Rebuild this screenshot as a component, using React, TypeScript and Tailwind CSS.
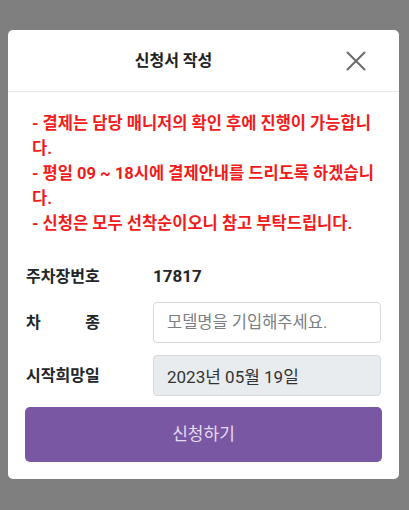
const font = { fontFamily: 'Roboto, "Noto Sans CJK KR", sans-serif' };

function CloseIcon() {
  return (
    <svg width="20" height="20" viewBox="0 0 20 20" fill="none" stroke="#6b6b6b" strokeWidth="2" strokeLinecap="round">
      <path d="M1.5 1.5 L18.5 18.5 M18.5 1.5 L1.5 18.5" />
    </svg>
  );
}

export default function App() {
  return (
    <div
      className="min-h-[510px] w-full bg-[#7f7f7f] pt-[30px] px-[8px] pb-[32px] text-[#212529]"
      style={font}
    >
      <div className="w-[391px] rounded-[5px] bg-white">
        <div className="flex h-[62px] items-center border-b border-[#e6e6e6]">
          <h2 className="w-[331px] text-center text-[16px] font-bold text-[#222]">신청서 작성</h2>
          <button className="ml-[7px] flex h-[20px] w-[20px] items-center justify-center">
            <CloseIcon />
          </button>
        </div>

        <div className="px-[17px] pt-[19px] pb-[17px]">
          <div className="w-[353px] pl-[7px] text-[16.5px] font-bold leading-[25px] text-[#f01b1b]">
            <p>- 결제는 담당 매니저의 확인 후에 진행이 가능합니다.</p>
            <p>- 평일 09 ~ 18시에 결제안내를 드리도록 하겠습니다.</p>
            <p>- 신청은 모두 선착순이오니 참고 부탁드립니다.</p>
          </div>

          <div className="mt-[28px] flex flex-col gap-[12px]">
            <div className="flex h-[26px] items-center">
              <span className="w-[128px] pl-[1px] text-[16px] font-bold">주차장번호</span>
              <span className="text-[17px] font-bold">17817</span>
            </div>

            <div className="flex items-center">
              <span className="flex w-[75px] justify-between pl-[1px] text-[16px] font-bold">
                <span>차</span>
                <span>종</span>
              </span>
              <input
                className="ml-[53px] h-[41px] w-[228px] rounded-[4px] border border-[#d5d8dc] px-[13px] text-[16.5px] text-[#495057] outline-none placeholder:text-[#7b7f84]"
                placeholder="모델명을 기입해주세요."
              />
            </div>

            <div className="flex items-center">
              <span className="w-[128px] pl-[1px] text-[16px] font-bold">시작희망일</span>
              <input
                readOnly
                value="2023년 05월 19일"
                className="h-[41px] w-[228px] rounded-[4px] border border-[#d5d8dc] bg-[#e9ecef] px-[13px] text-[17px] text-[#333] outline-none"
              />
            </div>
          </div>

          <button className="mt-[11px] flex h-[55px] w-full items-center justify-center rounded-[5px] bg-[#7a57a3] text-[17px] text-[#e6dcf0]">
            신청하기
          </button>
        </div>
      </div>
    </div>
  );
}
